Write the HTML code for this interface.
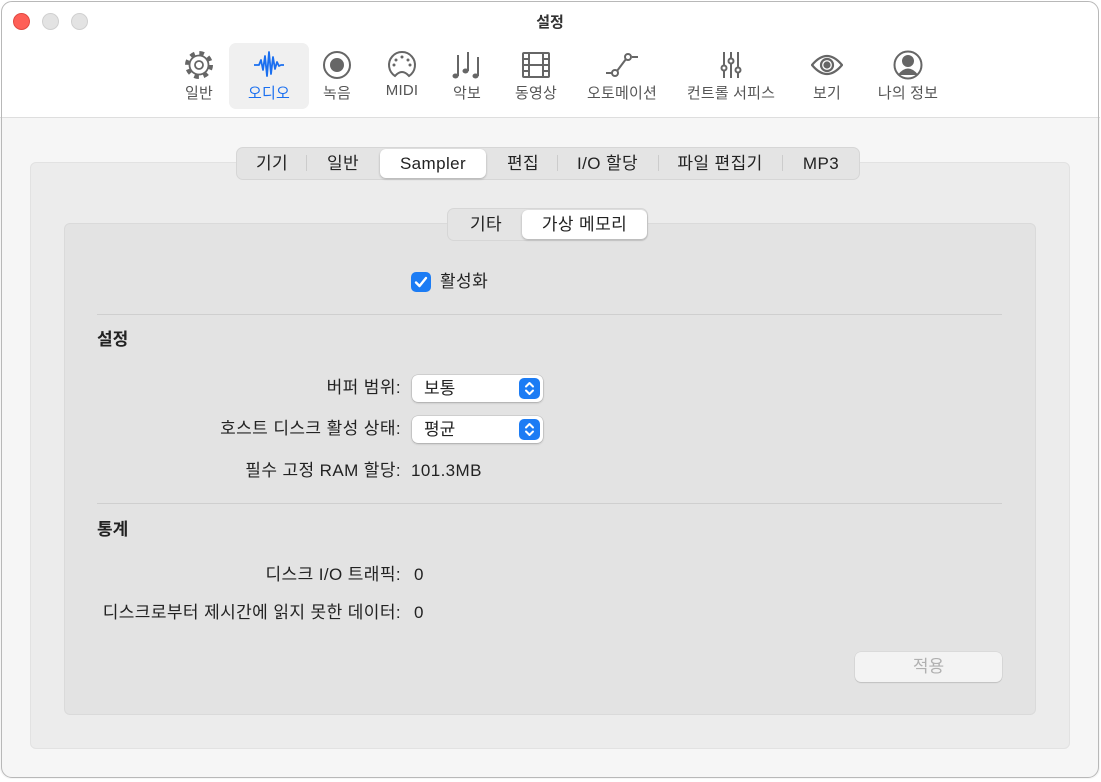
<!DOCTYPE html>
<html><head><meta charset="utf-8">
<style>
*{margin:0;padding:0;box-sizing:border-box}
body{width:1101px;height:782px;background:#fff;font-family:"Liberation Sans","Noto Sans CJK KR",sans-serif;position:relative;overflow:hidden;color:#222}
.win{position:absolute;left:0;top:0;width:1100px;height:779px;border-radius:11px;background:#f6f6f6;overflow:hidden}
.frame{position:absolute;left:1px;top:1px;width:1098px;height:777px;border:1px solid #b8b8b8;border-radius:11px;pointer-events:none}
.tb{position:absolute;left:0;top:0;width:100%;height:118px;background:#fff;border-bottom:1px solid #dedede}
.dot{position:absolute;top:13px;width:17px;height:17px;border-radius:50%}
.title{position:absolute;top:11px;left:0;width:100%;text-align:center;font-size:15px;font-weight:bold;color:#333}
.it{position:absolute;top:43px;height:66px;text-align:center;color:#555;font-size:15px;letter-spacing:.2px}
.it svg{position:absolute;top:6px;left:50%;margin-left:-16px}
.it span{position:absolute;top:39px;left:-20px;right:-20px;white-space:nowrap}
.sel{background:#f0f0f0;border-radius:7px;color:#1a6ff0}
.abs{position:absolute}
.seg{position:absolute;background:#e4e4e4;border:1px solid #d6d6d6;border-radius:7px}
.seg div{position:absolute;top:0;height:100%;text-align:center;font-size:17px;letter-spacing:.4px;line-height:31px;color:#222;white-space:nowrap}
.seg .on{background:#fff;border-radius:6px;box-shadow:0 1px 2px rgba(0,0,0,.25);top:1px;height:calc(100% - 2px);line-height:29px}
.sep{position:absolute;top:7px;width:1px;height:16px;background:#ccc}
.lbl{position:absolute;right:699px;font-size:17px;letter-spacing:.4px;line-height:22px;height:22px;color:#222;white-space:nowrap}
.val{position:absolute;font-size:17px;letter-spacing:.4px;line-height:22px;height:22px;color:#222}
.pop{position:absolute;left:412px;width:131px;height:27px;background:#fff;border-radius:6px;box-shadow:0 0 0 .5px rgba(0,0,0,.15),0 1px 2px rgba(0,0,0,.2);font-size:17px;line-height:28px;padding-left:12px}
.pop i{position:absolute;right:3px;top:3px;width:21px;height:21px;border-radius:5px;background:#1c7cf4}
.h{position:absolute;left:97px;font-size:17px;line-height:22px;font-weight:bold}
.hr{position:absolute;left:97px;width:905px;height:1px;background:#cfcfcf}
</style></head><body>
<div class="win">
<div class="tb">
 <div class="dot" style="left:13px;background:#fe5f57;border:1px solid #e14942"></div>
 <div class="dot" style="left:42px;background:#e3e3e3;border:1px solid #d0d0d0"></div>
 <div class="dot" style="left:71px;background:#e3e3e3;border:1px solid #d0d0d0"></div>
 <div class="title">설정</div>

 <div class="it" style="left:170px;width:58px"><svg width="32" height="32" viewBox="0 0 32 32" fill="none" stroke="#666"><circle cx="16" cy="16" r="11.5" stroke-width="5" stroke-dasharray="4.5 4.53"/><circle cx="16" cy="16" r="9.5" stroke-width="1.8" fill="#fff"/><circle cx="16" cy="16" r="4" stroke-width="1.8"/></svg><span>일반</span></div>
 <div class="it sel" style="left:229px;width:80px"><svg width="32" height="32" viewBox="0 0 32 32" fill="none" stroke="#1a6ff0" stroke-width="1.8" stroke-linejoin="round"><path d="M1 16h5l2-5 2 10 2-14 2 20 2-24 2 22 2-17 2 12 2-7 2 4 2-1h3"/></svg><span>오디오</span></div>
 <div class="it" style="left:310px;width:54px"><svg width="32" height="32" viewBox="0 0 32 32" fill="none" stroke="#666" stroke-width="2"><circle cx="16" cy="16" r="13"/><circle cx="16" cy="16" r="6" fill="#666"/></svg><span>녹음</span></div>
 <div class="it" style="left:372px;width:60px"><svg width="32" height="32" viewBox="0 0 32 32" fill="none" stroke="#666" stroke-width="2"><path d="M9 27A13 13 0 1 1 23 27Q16 19 9 27z"/><g fill="#666" stroke="none"><circle cx="16" cy="8" r="1.5"/><circle cx="10" cy="11" r="1.5"/><circle cx="22" cy="11" r="1.5"/><circle cx="8" cy="16" r="1.5"/><circle cx="24" cy="16" r="1.5"/></g></svg><span>MIDI</span></div>
 <div class="it" style="left:440px;width:54px"><svg width="32" height="32" viewBox="0 0 32 32" fill="#666" stroke="#666" stroke-width="2"><path d="M7 27V6M17 22V3M27 27V8" fill="none"/><ellipse cx="4.5" cy="27" rx="3" ry="2.5" stroke="none"/><ellipse cx="14.5" cy="22" rx="3" ry="2.5" stroke="none"/><ellipse cx="24.5" cy="27" rx="3" ry="2.5" stroke="none"/></svg><span>악보</span></div>
 <div class="it" style="left:506px;width:60px"><svg width="32" height="32" viewBox="0 0 32 32" fill="none" stroke="#666" stroke-width="2"><rect x="3" y="4" width="26" height="24" rx="1"/><path d="M9 4v24M23 4v24M9 16h14M3 10h6M3 16h6M3 22h6M23 10h6M23 16h6M23 22h6"/></svg><span>동영상</span></div>
 <div class="it" style="left:582px;width:80px"><svg width="32" height="32" viewBox="0 0 32 32" fill="none" stroke="#666" stroke-width="2"><path d="M-2 24h8M26 8h8"/><circle cx="9" cy="24" r="3"/><circle cx="22" cy="8" r="3"/><path d="M11 22l9-12"/></svg><span>오토메이션</span></div>
 <div class="it" style="left:681px;width:100px"><svg width="32" height="32" viewBox="0 0 32 32" fill="none" stroke="#666" stroke-width="2"><path d="M9 3v26M16 3v26M23 3v26"/><circle cx="9" cy="19" r="2.5" fill="#fff"/><circle cx="16" cy="12" r="2.5" fill="#fff"/><circle cx="23" cy="21" r="2.5" fill="#fff"/></svg><span>컨트롤 서피스</span></div>
 <div class="it" style="left:800px;width:54px"><svg width="32" height="32" viewBox="0 0 32 32" fill="none" stroke="#666" stroke-width="2.2"><path d="M1 16Q16 -2 31 16Q16 34 1 16z"/><circle cx="16" cy="16" r="6"/><circle cx="16" cy="16" r="2.5" fill="#666"/></svg><span>보기</span></div>
 <div class="it" style="left:870px;width:76px"><svg width="32" height="32" viewBox="0 0 32 32" fill="none" stroke="#666" stroke-width="2"><circle cx="16" cy="16" r="13.5"/><circle cx="16" cy="12" r="5" fill="#666"/><path d="M7 26Q16 15 25 26" fill="#666"/></svg><span>나의 정보</span></div>
</div>

<div class="abs" style="left:30px;top:162px;width:1040px;height:587px;background:#ececec;border:1px solid #e2e2e2;border-radius:6px"></div>
<div class="seg" style="left:236px;top:147px;width:624px;height:33px">
 <div style="left:0;width:70px">기기</div><span class="sep" style="left:69px"></span>
 <div style="left:70px;width:72px">일반</div>
 <div class="on" style="left:143px;width:106px">Sampler</div>
 <div style="left:252px;width:68px">편집</div><span class="sep" style="left:320px"></span>
 <div style="left:320px;width:101px">I/O 할당</div><span class="sep" style="left:421px"></span>
 <div style="left:421px;width:124px">파일 편집기</div><span class="sep" style="left:545px"></span>
 <div style="left:545px;width:78px">MP3</div>
</div>

<div class="abs" style="left:64px;top:223px;width:972px;height:492px;background:#e3e3e3;border:1px solid #dadada;border-radius:6px"></div>
<div class="seg" style="left:447px;top:208px;width:201px;height:33px">
 <div style="left:0;width:76px">기타</div>
 <div class="on" style="left:74px;width:125px">가상 메모리</div>
</div>

<div class="abs" style="left:411px;top:272px;width:20px;height:20px;border-radius:5px;background:#1c7cf4"><svg width="20" height="20" viewBox="0 0 20 20"><path d="M5 10.5l3.5 3.5L15 6" fill="none" stroke="#fff" stroke-width="2.4" stroke-linecap="round" stroke-linejoin="round"/></svg></div>
<div class="val" style="left:440px;top:271px">활성화</div>
<div class="hr" style="top:314px"></div>
<div class="h" style="top:329px">설정</div>

<div class="lbl" style="top:377px">버퍼 범위:</div>
<div class="pop" style="top:375px">보통<i><svg width="21" height="21" viewBox="0 0 21 21" fill="none" stroke="#fff" stroke-width="2" stroke-linecap="round" stroke-linejoin="round"><path d="M7 8.5l3.5-3.5 3.5 3.5M7 12.5l3.5 3.5 3.5-3.5"/></svg></i></div>
<div class="lbl" style="top:418px">호스트 디스크 활성 상태:</div>
<div class="pop" style="top:416px">평균<i><svg width="21" height="21" viewBox="0 0 21 21" fill="none" stroke="#fff" stroke-width="2" stroke-linecap="round" stroke-linejoin="round"><path d="M7 8.5l3.5-3.5 3.5 3.5M7 12.5l3.5 3.5 3.5-3.5"/></svg></i></div>
<div class="lbl" style="top:460px">필수 고정 RAM 할당:</div>
<div class="val" style="left:411px;top:460px">101.3MB</div>

<div class="hr" style="top:503px"></div>
<div class="h" style="top:519px">통계</div>
<div class="lbl" style="top:564px">디스크 I/O 트래픽:</div>
<div class="val" style="left:414px;top:564px">0</div>
<div class="lbl" style="top:602px">디스크로부터 제시간에 읽지 못한 데이터:</div>
<div class="val" style="left:414px;top:602px">0</div>

<div class="abs" style="left:855px;top:652px;width:147px;height:30px;background:#f3f3f3;border-radius:6px;box-shadow:0 0 0 .5px rgba(0,0,0,.08),0 1px 1px rgba(0,0,0,.12);text-align:center;line-height:30px;font-size:17px;color:#b0b0b0">적용</div>
</div>
<div class="frame"></div>
</body></html>
